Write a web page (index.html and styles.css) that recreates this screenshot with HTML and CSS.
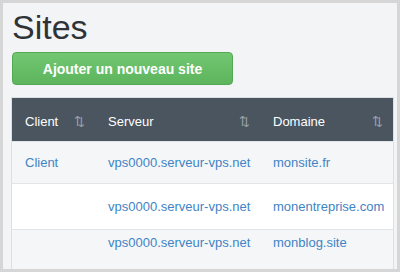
FILE: index.html
```html
<!DOCTYPE html>
<html lang="fr">

<head>
    <meta charset="UTF-8">
    <title>Sites</title>
    <link rel="stylesheet" href="styles.css">
</head>

<body>

    <div class="frame">
        <h1>Sites</h1>

        <button class="btn-add">Ajouter un nouveau site</button>

        <table class="sites">
            <thead>
                <tr>
                    <th class="col-client">Client <span class="sort">&#8645;</span></th>
                    <th class="col-server">Serveur <span class="sort">&#8645;</span></th>
                    <th class="col-domain">Domaine <span class="sort">&#8645;</span></th>
                </tr>
            </thead>
            <tbody>
                <tr class="row-first">
                    <td><a href="#">Client</a></td>
                    <td><a href="#">vps0000.serveur-vps.net</a></td>
                    <td><a href="#">monsite.fr</a></td>
                </tr>
                <tr class="row-mid">
                    <td></td>
                    <td><a href="#">vps0000.serveur-vps.net</a></td>
                    <td><a href="#">monentreprise.com</a></td>
                </tr>
                <tr class="row-last">
                    <td></td>
                    <td><a href="#">vps0000.serveur-vps.net</a></td>
                    <td><a href="#">monblog.site</a></td>
                </tr>
            </tbody>
        </table>
    </div>

</body>

</html>
```

FILE: styles.css
```css
body {
    margin: 0;
    font-family: "Liberation Sans", Arial, sans-serif;
}

.frame {
    width: 400px;
    height: 272px;
    box-sizing: border-box;
    border: 3px solid #d6d6d6;
    background-color: #f3f4f6;
    padding: 0 3px 0 8px;
    overflow: hidden;
}

h1 {
    margin: 7px 0 0 1px;
    font-size: 34px;
    font-weight: normal;
    line-height: 34px;
    color: #2f3337;
}

.btn-add {
    display: block;
    margin: 8px 0 0 1px;
    width: 221px;
    height: 33px;
    border: 1px solid #55a955;
    border-radius: 4px;
    background: linear-gradient(#72c872, #5cb45c);
    color: white;
    font-family: "Liberation Sans", Arial, sans-serif;
    font-size: 14px;
    font-weight: bold;
    cursor: pointer;
}

.sites {
    margin-top: 12px;
    width: 383px;
    table-layout: fixed;
    border-collapse: collapse;
    border: 1px solid #dcdfe3;
    font-size: 13px;
    white-space: nowrap;
}

.sites th {
    background-color: #4b555f;
    color: white;
    font-weight: normal;
    text-align: left;
    height: 40px;
    padding: 3px 10px 0 13px;
}

.sort {
    float: right;
    color: #9aa2aa;
    font-size: 13px;
}

.col-client {
    width: 60px;
}

.col-server {
    width: 142px;
}

.sites td {
    padding: 0 10px 0 13px;
    border-top: 1px solid #e2e5e8;
}

.row-first td {
    height: 41px;
}

.row-mid td {
    height: 45px;
}

.row-last td {
    height: 40px;
    padding-top: 5px;
    vertical-align: top;
}

.sites tbody tr:nth-child(odd) {
    background-color: #f5f6f8;
}

.sites tbody tr:nth-child(even) {
    background-color: white;
}

.sites a {
    color: #3f84c4;
    text-decoration: none;
}
```
